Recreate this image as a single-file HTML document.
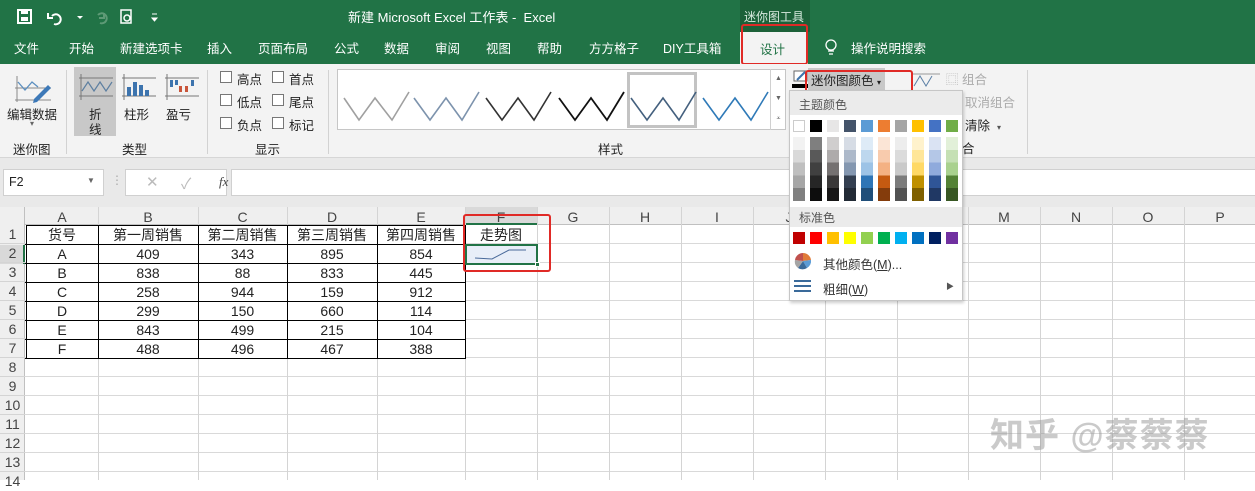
<!DOCTYPE html>
<html><head><meta charset="utf-8"><style>
*{margin:0;padding:0;box-sizing:border-box}
body{width:1255px;height:480px;overflow:hidden;position:relative;background:#fff;font-family:"Liberation Sans","Noto Sans CJK SC",sans-serif;font-size:13px;color:#222}
.a{position:absolute}
.t{position:absolute;white-space:nowrap}
.tab{position:absolute;top:38px;color:#fff;font-size:12.5px}
.cb{position:absolute;width:12px;height:12px;border:1px solid #777;background:#fff}
.sq{position:absolute;width:12px;height:12px}
.vl{position:absolute;top:207px;bottom:0;width:1px;background:#d4d4d4}
.hdr{position:absolute;top:209px;font-size:14px;color:#444;text-align:center}
.cell{position:absolute;text-align:center;font-size:14px;color:#222;line-height:19px;height:19px}
</style></head><body>
<div class="a" style="left:0;top:0;width:1255px;height:64px;background:#217346"></div>
<div class="a" style="left:740px;top:0;width:70px;height:32px;background:#1c6139"></div>
<div class="t" style="left:744px;top:8px;color:#d8eadf;font-size:12px">迷你图工具</div>
<div class="t" style="left:348px;top:7px;color:#fff;font-size:13px">新建 Microsoft Excel 工作表 - &nbsp;Excel</div>
<svg class="a" style="left:14px;top:6px" width="150" height="22">
<rect x="4" y="4" width="13" height="13" fill="none" stroke="#fff" stroke-width="2"/><rect x="7" y="4" width="7" height="4" fill="#fff"/><rect x="7" y="11" width="7" height="4" fill="#fff"/>
<path d="M38 10 a5 5 0 1 1 2 8 M34 7 v5 h5" fill="none" stroke="#fff" stroke-width="2"/><path d="M63 10 l3 3 3-3z" fill="#fff"/>
<path d="M86 17 a5 5 0 1 0 -2 -8 M90 7 v5 h-5" fill="none" stroke="#5e9a76" stroke-width="2"/>
<rect x="107" y="4" width="10" height="13" fill="none" stroke="#fff" stroke-width="1.5"/><circle cx="113" cy="12" r="3" fill="none" stroke="#fff" stroke-width="1.5"/>
<path d="M138 8h5 M138 12 l2.5 3 2.5-3z" stroke="#fff" fill="#fff"/>
</svg>
<div class="tab" style="left:14px">文件</div><div class="tab" style="left:69px">开始</div><div class="tab" style="left:120px">新建选项卡</div><div class="tab" style="left:207px">插入</div><div class="tab" style="left:258px">页面布局</div><div class="tab" style="left:334px">公式</div><div class="tab" style="left:384px">数据</div><div class="tab" style="left:435px">审阅</div><div class="tab" style="left:486px">视图</div><div class="tab" style="left:537px">帮助</div><div class="tab" style="left:589px">方方格子</div><div class="tab" style="left:663px">DIY工具箱</div>
<div class="a" style="left:740px;top:32px;width:68px;height:34px;background:#f3f3f3"></div>
<div class="t" style="left:760px;top:39px;color:#217346;font-size:12.5px">设计</div>
<div class="a" style="left:741px;top:24px;width:67px;height:41px;border:2px solid #e02a26;border-radius:3px"></div>
<svg class="a" style="left:824px;top:39px" width="14" height="18"><circle cx="7" cy="6" r="5" fill="none" stroke="#fff" stroke-width="1.3"/><path d="M4 12h6M5 15h4" stroke="#fff" stroke-width="1.3"/></svg>
<div class="tab" style="left:851px">操作说明搜索</div>
<div class="a" style="left:0;top:64px;width:1255px;height:94px;background:#f3f3f3;border-bottom:1px solid #d6d6d6"></div>
<div class="a" style="left:66px;top:70px;width:1px;height:84px;background:#d2d2d2"></div>
<div class="a" style="left:207px;top:70px;width:1px;height:84px;background:#d2d2d2"></div>
<div class="a" style="left:328px;top:70px;width:1px;height:84px;background:#d2d2d2"></div>
<div class="a" style="left:1027px;top:70px;width:1px;height:84px;background:#d2d2d2"></div>
<svg class="a" style="left:14px;top:72px" width="40" height="32"><path d="M3 4v26M1 16h36M1 28h36" stroke="#888" stroke-width="1"/><path d="M4 10l7 8 7-8 6 5" stroke="#5b8fc0" fill="none" stroke-width="1.3"/><path d="M20 27l14-14 3 3-14 14-4 1z" fill="#3d79b8"/></svg>
<div class="t" style="left:7px;top:104px;font-size:12.5px">编辑数据</div>
<div class="t" style="left:30px;top:119px;font-size:8px;color:#666">▾</div>
<div class="t" style="left:13px;top:139px;font-size:12.5px">迷你图</div>
<div class="a" style="left:74px;top:67px;width:42px;height:69px;background:#c8c8c8"></div>
<svg class="a" style="left:78px;top:72px" width="36" height="28"><path d="M1 6h34M1 24h34M3 2v26" stroke="#777"/><path d="M4 19l6-9 6 9 6-9 6 9 6-9" stroke="#5d7fa0" fill="none" stroke-width="1.2"/></svg>
<div class="t" style="left:89px;top:104px;font-size:12.5px">折</div><div class="t" style="left:89px;top:119px;font-size:12.5px">线</div>
<svg class="a" style="left:121px;top:72px" width="36" height="28"><path d="M1 6h34M1 24h34M3 2v26" stroke="#777"/><rect x="6" y="15" width="4" height="9" fill="#3d74ae"/><rect x="12" y="10" width="4" height="14" fill="#3d74ae"/><rect x="18" y="13" width="4" height="11" fill="#3d74ae"/><rect x="24" y="18" width="4" height="6" fill="#3d74ae"/></svg>
<div class="t" style="left:124px;top:104px;font-size:12.5px">柱形</div>
<svg class="a" style="left:164px;top:72px" width="36" height="28"><path d="M1 6h34M1 24h34M3 2v26" stroke="#777"/><rect x="6" y="8" width="3" height="7" fill="#3d74ae"/><rect x="11" y="8" width="3" height="5" fill="#3d74ae"/><rect x="15" y="14" width="3" height="6" fill="#c9553a"/><rect x="21" y="14" width="3" height="6" fill="#c9553a"/><rect x="27" y="8" width="3" height="6" fill="#3d74ae"/></svg>
<div class="t" style="left:166px;top:104px;font-size:12.5px">盈亏</div>
<div class="t" style="left:122px;top:139px;font-size:12.5px">类型</div>
<div class="cb" style="left:220px;top:71px"></div><div class="t" style="left:237px;top:69px;font-size:12.5px">高点</div>
<div class="cb" style="left:272px;top:71px"></div><div class="t" style="left:289px;top:69px;font-size:12.5px">首点</div>
<div class="cb" style="left:220px;top:94px"></div><div class="t" style="left:237px;top:92px;font-size:12.5px">低点</div>
<div class="cb" style="left:272px;top:94px"></div><div class="t" style="left:289px;top:92px;font-size:12.5px">尾点</div>
<div class="cb" style="left:220px;top:117px"></div><div class="t" style="left:237px;top:115px;font-size:12.5px">负点</div>
<div class="cb" style="left:272px;top:117px"></div><div class="t" style="left:289px;top:115px;font-size:12.5px">标记</div>
<div class="t" style="left:255px;top:139px;font-size:12.5px">显示</div>
<div class="a" style="left:337px;top:69px;width:449px;height:61px;background:#fff;border:1px solid #c6c6c6"></div>
<div class="a" style="left:627px;top:72px;width:70px;height:56px;border:3px solid #c3c3c3"></div>
<svg class="a" style="left:338px;top:70px" width="432" height="58">
<path d="M6 28l15 22 16-22 17 22 17-28" stroke="#a0a0a0" fill="none" stroke-width="1.6"/>
<path d="M76 28l16 22 16-22 16 22 17-28" stroke="#7d93ad" fill="none" stroke-width="1.6"/>
<path d="M148 28l16 22 16-22 16 22 17-28" stroke="#333" fill="none" stroke-width="1.6"/>
<path d="M221 28l16 22 16-22 16 22 17-28" stroke="#111" fill="none" stroke-width="1.8"/>
<path d="M293 28l16 22 16-22 16 22 17-28" stroke="#44607e" fill="none" stroke-width="1.6"/>
<path d="M365 28l16 22 16-22 16 22 17-28" stroke="#2f7ab8" fill="none" stroke-width="1.6"/>
</svg>
<div class="a" style="left:770px;top:69px;width:16px;height:61px;border-left:1px solid #d0d0d0;font-size:7px;color:#666;text-align:center;line-height:20px">▲<br>▼<br>⩡</div>
<div class="t" style="left:598px;top:139px;font-size:12.5px">样式</div>
<svg class="a" style="left:792px;top:69px" width="20" height="20"><rect x="2" y="2" width="13" height="10" fill="#fff" stroke="#666"/><path d="M5 11l8-8" stroke="#3d74ae" stroke-width="2"/><rect x="0" y="15" width="18" height="4" fill="#000"/></svg>
<div class="a" style="left:808px;top:68px;width:77px;height:22px;background:#c8c8c8"></div>
<div class="t" style="left:811px;top:70px;font-size:12.5px">迷你图颜色 <span style="font-size:8px">▾</span></div>
<svg class="a" style="left:912px;top:70px" width="30" height="20"><path d="M2 16l6-10 6 10 6-10" stroke="#5b7fa5" fill="none"/><path d="M0 4h28" stroke="#999"/></svg>
<div class="t" style="left:946px;top:69px;font-size:12.5px;color:#aaa">⿴ 组合</div>
<div class="t" style="left:965px;top:92px;font-size:12.5px;color:#aaa">取消组合</div>
<div class="t" style="left:965px;top:115px;font-size:12.5px">清除 &nbsp;<span style="font-size:8px;color:#555">▾</span></div>
<div class="t" style="left:962px;top:138px;font-size:12.5px">合</div>
<div class="a" style="left:805px;top:70px;width:108px;height:31px;border:2px solid #e02a26;border-radius:3px"></div>
<div class="a" style="left:0;top:158px;width:1255px;height:49px;background:#e9e9e9"></div>
<div class="a" style="left:3px;top:169px;width:101px;height:27px;background:#fff;border:1px solid #d0d0d0"></div>
<div class="t" style="left:9px;top:175px;font-size:12.5px">F2</div>
<div class="t" style="left:87px;top:176px;font-size:8px;color:#666">▼</div>
<div class="t" style="left:111px;top:173px;color:#aaa;font-size:12px">⋮</div>
<div class="a" style="left:125px;top:169px;width:102px;height:27px;background:#fff;border:1px solid #d0d0d0"></div>
<div class="t" style="left:146px;top:173px;color:#bbb;font-size:15px">✕</div>
<div class="t" style="left:181px;top:173px;color:#bbb;font-size:15px">✓</div>
<div class="t" style="left:219px;top:174px;color:#444;font-size:13px;font-style:italic;font-family:'Liberation Serif',serif">fx</div>
<div class="a" style="left:231px;top:169px;width:1030px;height:27px;background:#fff;border:1px solid #d0d0d0"></div>
<div class="a" style="left:0;top:207px;width:1255px;height:18px;background:#efefef;border-bottom:1px solid #c0c0c0"></div>
<div class="a" style="left:0;top:207px;width:25px;height:273px;background:#efefef;border-right:1px solid #c0c0c0"></div>
<div class="a" style="left:465px;top:207px;width:72px;height:18px;background:#d9d9d9;border-bottom:2px solid #217346"></div>
<div class="a" style="left:0;top:245px;width:25px;height:19px;background:#d9d9d9;border-right:2px solid #217346"></div>
<div class="a" style="left:25px;top:225px;width:1230px;height:255px;background:repeating-linear-gradient(to bottom,transparent 0,transparent 18px,#d9d9d9 18px,#d9d9d9 19px)"></div>
<div class="a" style="left:0;top:225px;width:25px;height:255px;background:repeating-linear-gradient(to bottom,transparent 0,transparent 18px,#d4d4d4 18px,#d4d4d4 19px)"></div>
<div class="vl" style="left:98px"></div><div class="vl" style="left:198px"></div><div class="vl" style="left:287px"></div><div class="vl" style="left:377px"></div><div class="vl" style="left:465px"></div><div class="vl" style="left:537px"></div><div class="vl" style="left:609px"></div><div class="vl" style="left:681px"></div><div class="vl" style="left:753px"></div><div class="vl" style="left:825px"></div><div class="vl" style="left:897px"></div><div class="vl" style="left:968px"></div><div class="vl" style="left:1040px"></div><div class="vl" style="left:1112px"></div><div class="vl" style="left:1184px"></div>
<div class="hdr" style="left:26px;width:72px">A</div><div class="hdr" style="left:98px;width:100px">B</div><div class="hdr" style="left:198px;width:89px">C</div><div class="hdr" style="left:287px;width:90px">D</div><div class="hdr" style="left:377px;width:88px">E</div><div class="hdr" style="left:465px;width:72px">F</div><div class="hdr" style="left:537px;width:72px">G</div><div class="hdr" style="left:609px;width:72px">H</div><div class="hdr" style="left:681px;width:72px">I</div><div class="hdr" style="left:753px;width:72px">J</div><div class="hdr" style="left:968px;width:72px">M</div><div class="hdr" style="left:1040px;width:72px">N</div><div class="hdr" style="left:1112px;width:72px">O</div><div class="hdr" style="left:1184px;width:72px">P</div>
<div class="a" style="left:0;top:225px;width:25px;font-size:14px;color:#444;line-height:19px;text-align:center">1<br>2<br>3<br>4<br>5<br>6<br>7<br>8<br>9<br>10<br>11<br>12<br>13<br>14</div>
<div class="a" style="left:26px;top:225px;width:440px;height:134px;background:#fff;border:1px solid #000;border-right:none"></div>
<svg class="a" style="left:25px;top:225px" width="442" height="135"><g stroke="#000" stroke-width="1"><path d="M0 19.5h441M0 38.5h441M0 57.5h441M0 76.5h441M0 95.5h441M0 114.5h441M0 133.5h441M73.5 0v134M173.5 0v134M262.5 0v134M352.5 0v134M440.5 0v134"/></g></svg>
<div class="cell" style="left:26px;top:226px;width:72px">货号</div><div class="cell" style="left:98px;top:226px;width:100px">第一周销售</div><div class="cell" style="left:198px;top:226px;width:89px">第二周销售</div><div class="cell" style="left:287px;top:226px;width:90px">第三周销售</div><div class="cell" style="left:377px;top:226px;width:88px">第四周销售</div><div class="cell" style="left:465px;top:226px;width:72px">走势图</div>
<div class="cell" style="left:26px;top:245px;width:72px">A</div><div class="cell" style="left:98px;top:245px;width:100px">409</div><div class="cell" style="left:198px;top:245px;width:89px">343</div><div class="cell" style="left:287px;top:245px;width:90px">895</div><div class="cell" style="left:377px;top:245px;width:88px">854</div>
<div class="cell" style="left:26px;top:264px;width:72px">B</div><div class="cell" style="left:98px;top:264px;width:100px">838</div><div class="cell" style="left:198px;top:264px;width:89px">88</div><div class="cell" style="left:287px;top:264px;width:90px">833</div><div class="cell" style="left:377px;top:264px;width:88px">445</div>
<div class="cell" style="left:26px;top:283px;width:72px">C</div><div class="cell" style="left:98px;top:283px;width:100px">258</div><div class="cell" style="left:198px;top:283px;width:89px">944</div><div class="cell" style="left:287px;top:283px;width:90px">159</div><div class="cell" style="left:377px;top:283px;width:88px">912</div>
<div class="cell" style="left:26px;top:302px;width:72px">D</div><div class="cell" style="left:98px;top:302px;width:100px">299</div><div class="cell" style="left:198px;top:302px;width:89px">150</div><div class="cell" style="left:287px;top:302px;width:90px">660</div><div class="cell" style="left:377px;top:302px;width:88px">114</div>
<div class="cell" style="left:26px;top:321px;width:72px">E</div><div class="cell" style="left:98px;top:321px;width:100px">843</div><div class="cell" style="left:198px;top:321px;width:89px">499</div><div class="cell" style="left:287px;top:321px;width:90px">215</div><div class="cell" style="left:377px;top:321px;width:88px">104</div>
<div class="cell" style="left:26px;top:340px;width:72px">F</div><div class="cell" style="left:98px;top:340px;width:100px">488</div><div class="cell" style="left:198px;top:340px;width:89px">496</div><div class="cell" style="left:287px;top:340px;width:90px">467</div><div class="cell" style="left:377px;top:340px;width:88px">388</div>
<div class="a" style="left:465px;top:244px;width:73px;height:21px;background:#e8eef8;border:2px solid #217346"></div>
<svg class="a" style="left:467px;top:246px" width="70" height="17"><path d="M8 12l17 1 17-9h17" stroke="#4a6a9a" fill="none" stroke-width="1"/></svg>
<div class="a" style="left:535px;top:262px;width:5px;height:5px;background:#217346;border:1px solid #fff"></div>
<div class="a" style="left:463px;top:214px;width:88px;height:58px;border:2px solid #e02a26;border-radius:3px"></div>
<div class="t" style="left:990px;top:408px;font-size:34px;color:rgba(150,150,150,0.5);font-weight:bold;letter-spacing:1px">知乎 @蔡蔡蔡</div>
<div class="a" style="left:789px;top:90px;width:174px;height:211px;background:#fff;border:1px solid #c6c6c6;box-shadow:1px 2px 3px rgba(0,0,0,.2)"></div>
<div class="a" style="left:790px;top:91px;width:172px;height:24px;background:#ebebeb"></div>
<div class="t" style="left:799px;top:96px;font-size:12px;color:#555">主题颜色</div>
<div class="a" style="left:790px;top:207px;width:172px;height:20px;background:#ebebeb"></div>
<div class="t" style="left:799px;top:209px;font-size:12px;color:#555">标准色</div>
<svg class="a" style="left:794px;top:252px" width="18" height="18"><path d="M9 9L9 1A8 8 0 0 1 17 8z" fill="#e07b39"/><path d="M9 9L17 8A8 8 0 0 1 13 16z" fill="#5b9bd5"/><path d="M9 9L13 16A8 8 0 0 1 4 16z" fill="#3a6a9a"/><path d="M9 9L4 16A8 8 0 0 1 1 8z" fill="#a5a5a5"/><path d="M9 9L1 8A8 8 0 0 1 9 1z" fill="#c0504d"/></svg>
<div class="t" style="left:823px;top:254px;font-size:12.5px;color:#333">其他颜色(<u>M</u>)...</div>
<svg class="a" style="left:794px;top:279px" width="18" height="14"><path d="M0 2h17M0 7h17M0 12h17" stroke="#3a6a9a" stroke-width="2"/></svg>
<div class="t" style="left:823px;top:279px;font-size:12.5px;color:#333">粗细(<u>W</u>)</div>
<div class="t" style="left:946px;top:281px;font-size:8px;color:#555">▶</div>
<div class="a" style="left:793px;top:120px;width:167px;height:12px">
<span class="sq" style="left:0;background:#fff;border:1px solid #ccc"></span><span class="sq" style="left:17px;background:#000"></span><span class="sq" style="left:34px;background:#e7e6e6"></span><span class="sq" style="left:51px;background:#44546a"></span><span class="sq" style="left:68px;background:#5b9bd5"></span><span class="sq" style="left:85px;background:#ed7d31"></span><span class="sq" style="left:102px;background:#a5a5a5"></span><span class="sq" style="left:119px;background:#ffc000"></span><span class="sq" style="left:136px;background:#4472c4"></span><span class="sq" style="left:153px;background:#70ad47"></span>
</div>
<div class="a" style="left:793px;top:137px;width:167px;height:64px">
<span class="sq" style="left:0;height:64px;background:linear-gradient(#f2f2f2 0 20%,#d9d9d9 20% 40%,#bfbfbf 40% 60%,#a6a6a6 60% 80%,#808080 80%)"></span>
<span class="sq" style="left:17px;height:64px;background:linear-gradient(#7f7f7f 0 20%,#595959 20% 40%,#404040 40% 60%,#262626 60% 80%,#0d0d0d 80%)"></span>
<span class="sq" style="left:34px;height:64px;background:linear-gradient(#d0cece 0 20%,#aeabab 20% 40%,#757171 40% 60%,#3a3838 60% 80%,#171616 80%)"></span>
<span class="sq" style="left:51px;height:64px;background:linear-gradient(#d6dce5 0 20%,#adb9ca 20% 40%,#8497b0 40% 60%,#333f50 60% 80%,#222a35 80%)"></span>
<span class="sq" style="left:68px;height:64px;background:linear-gradient(#deebf7 0 20%,#bdd7ee 20% 40%,#9dc3e6 40% 60%,#2e75b6 60% 80%,#1f4e79 80%)"></span>
<span class="sq" style="left:85px;height:64px;background:linear-gradient(#fbe5d6 0 20%,#f8cbad 20% 40%,#f4b183 40% 60%,#c55a11 60% 80%,#843c0c 80%)"></span>
<span class="sq" style="left:102px;height:64px;background:linear-gradient(#ededed 0 20%,#dbdbdb 20% 40%,#c9c9c9 40% 60%,#7b7b7b 60% 80%,#525252 80%)"></span>
<span class="sq" style="left:119px;height:64px;background:linear-gradient(#fff2cc 0 20%,#ffe699 20% 40%,#ffd966 40% 60%,#bf9000 60% 80%,#7f6000 80%)"></span>
<span class="sq" style="left:136px;height:64px;background:linear-gradient(#dae3f3 0 20%,#b4c7e7 20% 40%,#8faadc 40% 60%,#2f5597 60% 80%,#203864 80%)"></span>
<span class="sq" style="left:153px;height:64px;background:linear-gradient(#e2f0d9 0 20%,#c5e0b4 20% 40%,#a9d18e 40% 60%,#548235 60% 80%,#385723 80%)"></span>
</div>
<div class="a" style="left:793px;top:232px;width:167px;height:12px">
<span class="sq" style="left:0;background:#c00000"></span><span class="sq" style="left:17px;background:#ff0000"></span><span class="sq" style="left:34px;background:#ffc000"></span><span class="sq" style="left:51px;background:#ffff00"></span><span class="sq" style="left:68px;background:#92d050"></span><span class="sq" style="left:85px;background:#00b050"></span><span class="sq" style="left:102px;background:#00b0f0"></span><span class="sq" style="left:119px;background:#0070c0"></span><span class="sq" style="left:136px;background:#002060"></span><span class="sq" style="left:153px;background:#7030a0"></span>
</div>
</body></html>
